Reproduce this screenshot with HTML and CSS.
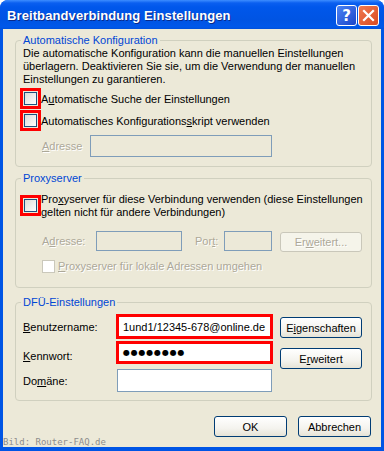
FILE: index.html
```html
<!DOCTYPE html>
<html lang="de">

<head>
     <meta charset="UTF-8">
     <meta name="viewport" content="width=device-width, initial-scale=1.0">
     <title>Breitbandverbindung Einstellungen</title>
     <link rel="stylesheet" href="styles.css">
</head>

<body>

     <div class="window">
          <div class="titlebar">
               <span class="title">Breitbandverbindung Einstellungen</span>
               <span class="cap help">?</span>
               <span class="cap close">
                    <svg width="19" height="19" viewBox="0 0 19 19">
                         <path d="M5 5 L14 14 M14 5 L5 14" stroke="#fff" stroke-width="2.2" stroke-linecap="square" />
                    </svg>
               </span>
          </div>

          <div class="client">

               <fieldset class="group g-auto">
                    <legend>Automatische Konfiguration</legend>
                    <p class="note">
                         Die automatische Konfiguration kann die manuellen Einstellungen<br>
                         überlagern. Deaktivieren Sie sie, um die Verwendung der manuellen<br>
                         Einstellungen zu garantieren.
                    </p>
                    <div class="check-row first">
                         <span class="mark"><span class="box"></span></span>
                         <span>A<u>u</u>tomatische Suche der Einstellungen</span>
                    </div>
                    <div class="check-row">
                         <span class="mark"><span class="box"></span></span>
                         <span>Automatisches Konfigurations<u>s</u>kript verwenden</span>
                    </div>
                    <div class="field-row auto-addr">
                         <span class="label off"><u>A</u>dresse</span>
                         <span class="textbox off addr-wide"></span>
                    </div>
               </fieldset>

               <fieldset class="group g-proxy">
                    <legend>Proxyserver</legend>
                    <div class="proxy-row">
                         <span class="mark"><span class="box"></span></span>
                         <span>Pro<u>x</u>yserver für diese Verbindung verwenden (diese Einstellungen<br>gelten nicht für andere Verbindungen)</span>
                    </div>
                    <div class="field-row proxy-addr">
                         <span class="label off addr-label">A<u>d</u>resse:</span>
                         <span class="textbox off proxy-host"></span>
                         <span class="label off port-label">Por<u>t</u>:</span>
                         <span class="textbox off proxy-port"></span>
                         <span class="btn off proxy-btn">Er<u>w</u>eitert...</span>
                    </div>
                    <div class="bypass-row">
                         <span class="box off"></span>
                         <span class="off"><u>P</u>roxyserver für lokale Adressen umgehen</span>
                    </div>
               </fieldset>

               <fieldset class="group g-dfu">
                    <legend>DFÜ-Einstellungen</legend>
                    <div class="dfu">
                         <div class="fields">
                              <div class="dfu-row user">
                                   <span class="dfu-label"><u>B</u>enutzername:</span>
                                   <span class="textbox marked">1und1/12345-678@online.de</span>
                              </div>
                              <div class="dfu-row pass">
                                   <span class="dfu-label"><u>K</u>ennwort:</span>
                                   <span class="textbox marked dots">●●●●●●●●</span>
                              </div>
                              <div class="dfu-row domain">
                                   <span class="dfu-label">Do<u>m</u>äne:</span>
                                   <span class="textbox domain-box"></span>
                              </div>
                         </div>
                         <div class="side-buttons">
                              <span class="btn wide">E<u>i</u>genschaften</span>
                              <span class="btn wide">E<u>r</u>weitert</span>
                         </div>
                    </div>
               </fieldset>

               <div class="actions">
                    <span class="btn">OK</span>
                    <span class="btn">Abbrechen</span>
               </div>

               <p class="credit">Bild: Router-FAQ.de</p>
          </div>
     </div>

</body>

</html>
```

FILE: styles.css
```css
* {
     box-sizing: border-box;
     margin: 0;
     padding: 0;
}

html {
     font-family: "Liberation Sans", Arial, sans-serif;
     font-size: 11px;
     color: #000;
}

body {
     background: #fff;
}

u {
     text-decoration: underline;
     text-underline-offset: 1px;
}

.window {
     width: 384px;
     height: 451px;
     display: flex;
     flex-direction: column;
     padding: 0 3px 4px;
     background: #0055e5;
     border-radius: 8px 8px 0 0;
}

.titlebar {
     height: 29px;
     display: flex;
     align-items: center;
     margin: 0 -3px;
     padding: 2px 5px 0 7px;
     background: linear-gradient(#3d8dff 0px, #0a5ff0 3px, #0057eb 7px, #0054e3 20px, #0058ea 27px, #0050da 29px);
     border-radius: 8px 8px 0 0;
}

.title {
     flex: 1;
     color: #fff;
     font-weight: bold;
     font-size: 13px;
     letter-spacing: 0.1px;
     text-shadow: 1px 1px #0a2a8a;
}

.cap {
     width: 21px;
     height: 21px;
     border: 1px solid #fff;
     border-radius: 3px;
     display: flex;
     align-items: center;
     justify-content: center;
}

.help {
     margin-right: 1px;
     background: linear-gradient(135deg, #4b84f5, #1a45c9);
     color: #fff;
     font-family: "DejaVu Sans", sans-serif;
     font-weight: bold;
     font-size: 15px;
}

.close {
     background: linear-gradient(135deg, #f07a50, #d94a22);
}

.client {
     flex: 1;
     background: #ece9d8;
     padding: 5px 9px 0 12px;
     overflow: hidden;
}

.group {
     border: 1px solid #d0d0bf;
     border-radius: 4px;
     padding: 0 7px 9px;
}

.group legend {
     color: #0046d5;
     line-height: 13px;
     padding: 0 2px;
     margin-left: -2px;
}

.note {
     line-height: 13px;
}

.check-row {
     display: flex;
     align-items: center;
     height: 21px;
     margin-top: 1px;
}

.check-row.first {
     margin-top: 2px;
}

.mark {
     display: flex;
     flex: none;
     border: 3px solid #f00;
     padding: 1px;
     margin-left: -3px;
}

.box {
     display: block;
     flex: none;
     width: 13px;
     height: 13px;
     border: 1px solid #1c5180;
     background: linear-gradient(135deg, #dcdcd7, #fff);
}

.box.off {
     border-color: #cac8bb;
     background: #fff;
}

.off {
     color: #aca899;
     text-shadow: 1px 1px #fff;
}

.field-row {
     display: flex;
     align-items: center;
}

.label {
     flex: none;
}

.textbox {
     display: flex;
     align-items: center;
     height: 21px;
     border: 1px solid #7f9db9;
     background: #fff;
     padding-left: 3px;
}

.textbox.off {
     background: #ece9d8;
}

.auto-addr {
     margin-top: 4px;
     padding-left: 19px;
}

.auto-addr .label {
     width: 48px;
}

.addr-wide {
     width: 182px;
     height: 22px;
}

.g-proxy {
     margin-top: 5px;
     padding-bottom: 14px;
}

.proxy-row {
     display: flex;
     align-items: flex-start;
     margin-top: 8px;
     line-height: 13px;
}

.proxy-row .mark {
     margin-top: 2px;
}

.proxy-addr {
     margin-top: 12px;
     padding-left: 19px;
     align-items: flex-start;
}

.proxy-addr .label {
     line-height: 20px;
}

.addr-label {
     width: 54px;
}

.proxy-host {
     width: 86px;
     height: 20px;
}

.port-label {
     width: 29px;
     margin-left: 13px;
}

.proxy-port {
     width: 48px;
     height: 20px;
}

.btn {
     display: flex;
     align-items: center;
     justify-content: center;
     width: 73px;
     height: 21px;
     border: 1px solid #003c74;
     border-radius: 3px;
     background: linear-gradient(#ffffff, #f4f3ee 60%, #e6e3d6);
}

.btn.off {
     border-color: #c9c7ba;
     background: #f5f4ea;
}

.proxy-btn {
     width: 82px;
     height: 20px;
     margin-left: 8px;
     margin-top: 1px;
}

.bypass-row {
     display: flex;
     align-items: center;
     gap: 3px;
     margin-top: 8px;
     padding-left: 19px;
     line-height: 13px;
}

.g-dfu {
     margin-top: 8px;
     padding-bottom: 8px;
}

.dfu {
     display: flex;
     margin-top: 5px;
}

.dfu-row {
     display: flex;
     align-items: center;
}

.dfu-label {
     width: 93px;
     flex: none;
}

.marked {
     width: 157px;
     border: 3px solid #f00;
     padding-left: 4px;
}

.user .marked {
     height: 25px;
}

.pass {
     margin-top: 2px;
}

.pass .dfu-label {
     padding-top: 6px;
}

.pass .marked {
     height: 23px;
}

.dots {
     font-family: "DejaVu Sans", sans-serif;
     font-size: 8px;
     letter-spacing: 0.8px;
}

.domain {
     margin-top: 5px;
}

.domain-box {
     width: 155px;
     height: 23px;
     margin-left: 1px;
}

.side-buttons {
     display: flex;
     flex-direction: column;
     gap: 10px;
     padding-top: 3px;
     margin-left: 7px;
}

.btn.wide {
     width: 82px;
}

.actions {
     display: flex;
     justify-content: flex-end;
     gap: 11px;
     margin-top: 15px;
     padding-right: 1px;
}

.credit {
     font-family: "DejaVu Sans Mono", monospace;
     font-size: 9px;
     line-height: 10px;
     color: #8c8c8c;
     margin-left: -12px;
}
```
